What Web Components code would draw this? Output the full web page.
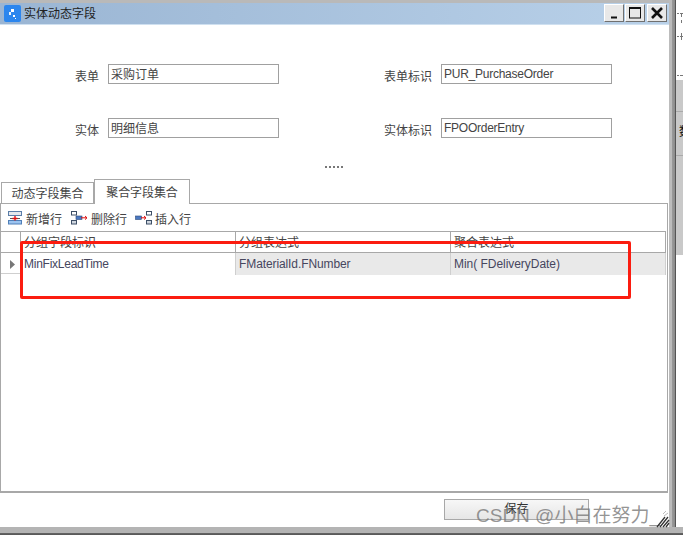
<!DOCTYPE html>
<html>
<head>
<meta charset="utf-8">
<style>
html, body { margin: 0; padding: 0; background: #fff; }
body { width: 683px; height: 535px; overflow: hidden; font: 12px "Liberation Sans", "Noto Sans CJK SC", sans-serif; color: #444; }
</style>
</head>
<body>
<entity-dialog title-text="实体动态字段">
  <form-row>
    <form-field label="表单" value="采购订单" label-width="99" input-width="171"></form-field>
    <form-field label="表单标识" value="PUR_PurchaseOrder" label-width="153" input-width="171"></form-field>
  </form-row>
  <form-row>
    <form-field label="实体" value="明细信息" label-width="99" input-width="171"></form-field>
    <form-field label="实体标识" value="FPOOrderEntry" label-width="153" input-width="171"></form-field>
  </form-row>
</entity-dialog>

<script>
const FONT = '"Liberation Sans", "Noto Sans CJK SC", sans-serif';

class FormRow extends HTMLElement {
    constructor() {
        super();
        this.attachShadow({ mode: 'open' });
        this.shadowRoot.innerHTML = `
        <style>
        :host { display: flex; height: 20px; margin-bottom: 34px; }
        </style>
        <slot></slot>`;
    }
}
customElements.define('form-row', FormRow);

class FormField extends HTMLElement {
    constructor() {
        super();
        this.attachShadow({ mode: 'open' });
    }

    connectedCallback() {
        const labelWidth = this.getAttribute('label-width');
        const inputWidth = this.getAttribute('input-width');
        const value = this.getAttribute('value');
        const cjk = /[^\x00-\x7f]/.test(value);
        this.shadowRoot.innerHTML = `
        <style>
        :host { display: flex; align-items: stretch; height: 20px; }
        .label {
            width: ${labelWidth}px;
            text-align: right;
            padding-top: 4px;
            box-sizing: border-box;
            line-height: 18px;
            color: #444;
        }
        .box {
            width: ${inputWidth}px;
            margin-left: 9px;
            box-sizing: border-box;
            border: 1px solid #a0a0a0;
            background: #fff;
            padding-left: 2px;
            line-height: 18px;
            white-space: nowrap;
            color: #444;
            letter-spacing: -0.25px;
        }
        .box.cjk { letter-spacing: 0; line-height: 20px; }
        </style>
        <div class="label">${this.getAttribute('label')}</div>
        <div class="box ${cjk ? 'cjk' : ''}">${value}</div>`;
    }
}
customElements.define('form-field', FormField);

class CaptionBar extends HTMLElement {
    constructor() {
        super();
        this.attachShadow({ mode: 'open' });
        this.shadowRoot.innerHTML = `
        <style>
        :host {
            display: flex;
            align-items: center;
            height: 22px;
            box-sizing: border-box;
            padding: 0 2px 0 4px;
            background: linear-gradient(90deg, #9ab5d3, #b9d1e9);
            border-bottom: 1px solid #cfe0f0;
            color: #222;
        }
        svg { display: block; }
        .title { margin-left: 3px; flex: 1; line-height: 20px; }
        .btns { display: flex; gap: 1px; margin-top: -1px; }
        .btn {
            width: 20px;
            height: 18px;
            box-sizing: border-box;
            background: #e8e8e8;
            border: 1px solid;
            border-color: #fff #707070 #707070 #fff;
            display: flex;
            align-items: center;
            justify-content: center;
        }
        .btn.close { margin-left: 1px; }
        </style>
        <svg width="17" height="17" viewBox="0 0 17 17">
            <rect width="17" height="17" rx="2" fill="#2b86ee"/>
            <rect x="7" y="4" width="3" height="3" fill="#fff"/>
            <rect x="5" y="7" width="2" height="3" fill="#e8f2fd"/>
            <rect x="9" y="10" width="2" height="2" fill="#fff"/>
            <rect x="11" y="13" width="1" height="1" fill="#fff"/>
        </svg>
        <div class="title"><slot></slot></div>
        <div class="btns">
            <div class="btn"><svg width="14" height="14" viewBox="0 0 14 14"><rect x="4" y="10.5" width="6" height="2" fill="#111"/></svg></div>
            <div class="btn"><svg width="14" height="14" viewBox="0 0 14 14"><rect x="1.5" y="2.5" width="11" height="9.5" fill="none" stroke="#111"/><rect x="1" y="1" width="12" height="2" fill="#111"/></svg></div>
            <div class="btn close"><svg width="14" height="14" viewBox="0 0 14 14"><path d="M2 2 L12 12 M12 2 L2 12" stroke="#111" stroke-width="2.6" fill="none"/></svg></div>
        </div>`;
    }
}
customElements.define('caption-bar', CaptionBar);

class ToolButton extends HTMLElement {
    constructor() {
        super();
        this.attachShadow({ mode: 'open' });
    }

    connectedCallback() {
        const icons = {
            add: `<svg width="15" height="14" viewBox="0 0 15 14">
                <rect x="0.5" y="0.5" width="13" height="4" fill="#e4e8ee" stroke="#5a7da8"/>
                <rect x="0.5" y="9.5" width="13" height="3.5" fill="#9cc4f0" stroke="#4f7fb8"/>
                <path d="M2 7.5 H12" stroke="#555" stroke-width="1"/>
                <path d="M7 5 V9.5 M4.5 7.5 H9.5" stroke="#e01010" stroke-width="1.4"/>
            </svg>`,
            remove: `<svg width="17" height="14" viewBox="0 0 17 14">
                <rect x="0.5" y="0.5" width="5" height="3.5" fill="#fff" stroke="#3d4f66"/>
                <rect x="0.5" y="9.5" width="5" height="3.5" fill="#cfd6df" stroke="#3d4f66"/>
                <rect x="5" y="5" width="6" height="3.5" fill="#4b78c0" stroke="#2c4a7c" stroke-width="0.6"/>
                <path d="M10 6.8 H16 M14 5 L16 6.8 L14 8.6" stroke="#e01010" fill="none"/>
            </svg>`,
            insert: `<svg width="17" height="14" viewBox="0 0 17 14">
                <rect x="0.5" y="5" width="6" height="3.5" fill="#4b78c0" stroke="#2c4a7c" stroke-width="0.6"/>
                <path d="M6 6.8 H11 M9 5 L11 6.8 L9 8.6" stroke="#e01010" fill="none"/>
                <rect x="11.5" y="0.5" width="5" height="3.5" fill="#fff" stroke="#3d4f66"/>
                <rect x="11.5" y="9.5" width="5" height="3.5" fill="#cfd6df" stroke="#3d4f66"/>
            </svg>`
        };
        this.shadowRoot.innerHTML = `
        <style>
        :host { display: flex; align-items: center; gap: 3px; color: #444; }
        svg { display: block; }
        </style>
        ${icons[this.getAttribute('icon')]}<slot></slot>`;
    }
}
customElements.define('tool-button', ToolButton);

class FieldGrid extends HTMLElement {
    constructor() {
        super();
        this.attachShadow({ mode: 'open' });
        this.shadowRoot.innerHTML = `
        <style>
        :host { display: block; margin-right: 1px; }
        .row {
            display: grid;
            grid-template-columns: 20px 215px 215px 215px;
            height: 21px;
            box-sizing: border-box;
            border-bottom: 1px solid #a8a8a8;
        }
        .head { border-top: 1px solid #a8a8a8; height: 22px; }
        .head .c { border-right: 1px solid #a8a8a8; padding-left: 3px; box-sizing: border-box; line-height: 22px; }
        .data { border-bottom-color: #cfcfcf; }
        .data .c { border-right: 1px solid #cfcfcf; padding-left: 3px; box-sizing: border-box; background: #e9e9e9; color: #46465e; white-space: nowrap; line-height: 22px; letter-spacing: -0.1px; }
        .data .c.first { background: #fff; letter-spacing: -0.25px; }
        .data .c.last { letter-spacing: -0.04px; }
        .rowhead { display: flex; align-items: center; justify-content: center; border-right: 1px solid #cfcfcf; }
        .head .rowhead { border-right: 1px solid #a8a8a8; }
        .rowhead svg { display: block; margin-left: 3px; }
        </style>
        <div class="row head">
            <div class="rowhead"></div>
            <div class="c">分组字段标识</div>
            <div class="c">分组表达式</div>
            <div class="c">聚合表达式</div>
        </div>
        <div class="row data">
            <div class="rowhead"><svg width="5" height="9" viewBox="0 0 5 9"><path d="M0 0 L5 4.5 L0 9 Z" fill="#777"/></svg></div>
            <div class="c first">MinFixLeadTime</div>
            <div class="c">FMaterialId.FNumber</div>
            <div class="c last">Min( FDeliveryDate)</div>
        </div>`;
    }
}
customElements.define('field-grid', FieldGrid);

class TabPanel extends HTMLElement {
    constructor() {
        super();
        this.attachShadow({ mode: 'open' });
        this.shadowRoot.innerHTML = `
        <style>
        :host { display: block; }
        .tabs { display: flex; align-items: flex-end; height: 25px; padding-left: 1px; position: relative; z-index: 1; margin-bottom: -1px; }
        .tab {
            box-sizing: border-box;
            width: 93px;
            height: 22px;
            border: 1px solid #a8a8a8;
            border-bottom: 0;
            text-align: center;
            line-height: 23px;
            color: #444;
        }
        .tab.on {
            width: 96px;
            height: 25px;
            background: #fff;
            line-height: 27px;
            letter-spacing: -0.1px;
        }
        .body {
            box-sizing: border-box;
            height: 290px;
            width: 668px;
            border: 2px solid #a8a8a8;
            border-width: 1px 1px 2px 1px;
        }
        .tools { display: flex; align-items: center; height: 27px; padding: 1px 0 0 7px; box-sizing: border-box; gap: 8px; }
        .tools :first-child { margin-right: 1px; }
        </style>
        <div class="tabs">
            <div class="tab">动态字段集合</div>
            <div class="tab on">聚合字段集合</div>
        </div>
        <div class="body">
            <div class="tools">
                <tool-button icon="add">新增行</tool-button>
                <tool-button icon="remove">删除行</tool-button>
                <tool-button icon="insert">插入行</tool-button>
            </div>
            <field-grid></field-grid>
        </div>`;
    }
}
customElements.define('tab-panel', TabPanel);

class EntityDialog extends HTMLElement {
    constructor() {
        super();
        this.attachShadow({ mode: 'open' });
    }

    connectedCallback() {
        this.shadowRoot.innerHTML = `
        <style>
        :host {
            display: block;
            position: relative;
            width: 683px;
            height: 535px;
            font-family: ${FONT};
            font-size: 12px;
            overflow: hidden;
        }
        .frame { display: flex; height: 527px; }
        .window {
            width: 669px;
            display: flex;
            flex-direction: column;
            padding-top: 3px;
            box-sizing: border-box;
            background: #fff;
            position: relative;
        }
        .topline { position: absolute; left: 0; right: 0; top: 0; height: 3px; background: #b9b9b9; }
        .form { padding-top: 39px; height: 109px; box-sizing: border-box; }
        .dots { height: 45px; box-sizing: border-box; padding: 32px 0 0 325px; }
        .dots span { display: block; width: 18px; height: 2px; background: repeating-linear-gradient(90deg, #777 0 2px, transparent 2px 4px); }
        .foot { display: flex; padding: 6px 0 0 444px; }
        .save {
            width: 145px;
            height: 21px;
            box-sizing: border-box;
            border: 1px solid #a8a8a8;
            background: linear-gradient(#f7f7f7, #e6e6e6);
            text-align: center;
            line-height: 19px;
            color: #333;
        }
        .edge {
            width: 7px;
            background: linear-gradient(90deg, #bcbcbc 0, #bcbcbc 3px, #9a9a9a 3px, #8c8c8c 6px, #555 6px);
        }
        .desktop { width: 7px; display: flex; flex-direction: column; }
        .desktop svg { display: block; }
        .d-top { height: 80px; background: #fff; }
        .d-band { height: 31px; background: #c9c9c9; }
        .d-tab { height: 45px; background: #c9c9c9; border-top: 1px solid #aaa; border-bottom: 1px solid #aaa; overflow: hidden; padding: 13px 0 0 3px; box-sizing: border-box; color: #111; line-height: 14px; white-space: nowrap; }
        .d-fill { height: 99px; background: #c9c9c9; }
        .bottom { height: 8px; background: linear-gradient(#b4b4b4 0, #b4b4b4 6px, #666 6px, #555 8px); }
        .mark {
            position: absolute;
            left: 476px;
            top: 504px;
            font-size: 19px;
            line-height: 24px;
            color: rgba(120, 120, 120, 0.78);
            white-space: nowrap;
            font-family: ${FONT};
        }
        .highlight {
            position: absolute;
            left: 20px;
            top: 241px;
            width: 611px;
            height: 58px;
            box-sizing: border-box;
            border: 3px solid #fb1c10;
            border-radius: 2px;
        }
        .grip { position: absolute; left: 656px; top: 510px; }
        </style>
        <div class="frame">
            <div class="window">
                <div class="topline"></div>
                <caption-bar>${this.getAttribute('title-text')}</caption-bar>
                <div class="form"><slot></slot></div>
                <div class="dots"><span></span></div>
                <tab-panel></tab-panel>
                <div class="foot"><div class="save">保存</div></div>
            </div>
            <div class="edge"></div>
            <div class="desktop">
                <div class="d-top">
                    <svg width="7" height="80" viewBox="0 0 7 80">
                        <path d="M1 13.5h2M4 13.5h3M5.5 14v3M5.5 20v3M1 36.5h2M4 36.5h3M5.5 33v3M5.5 37v3M1 75.5h2M4 75.5h3" stroke="#777" fill="none"/>
                    </svg>
                </div>
                <div class="d-band"></div>
                <div class="d-tab">数</div>
                <div class="d-fill"></div>
            </div>
        </div>
        <div class="bottom"></div>
        <div class="mark">CSDN @小白在努力_</div>
        <svg class="grip" width="14" height="18" viewBox="0 0 14 18">
            <path d="M1 17 L9 7 M4 17 L12 7 M7 17 L13 10 M10 17 L13 13" stroke="#333" stroke-width="1.3" fill="none"/>
            <path d="M7 4 L10 1 M8 6 L12 3" stroke="#bbb" stroke-width="1" fill="none"/>
        </svg>
        <div class="highlight"></div>`;
    }
}
customElements.define('entity-dialog', EntityDialog);
</script>
</body>
</html>
